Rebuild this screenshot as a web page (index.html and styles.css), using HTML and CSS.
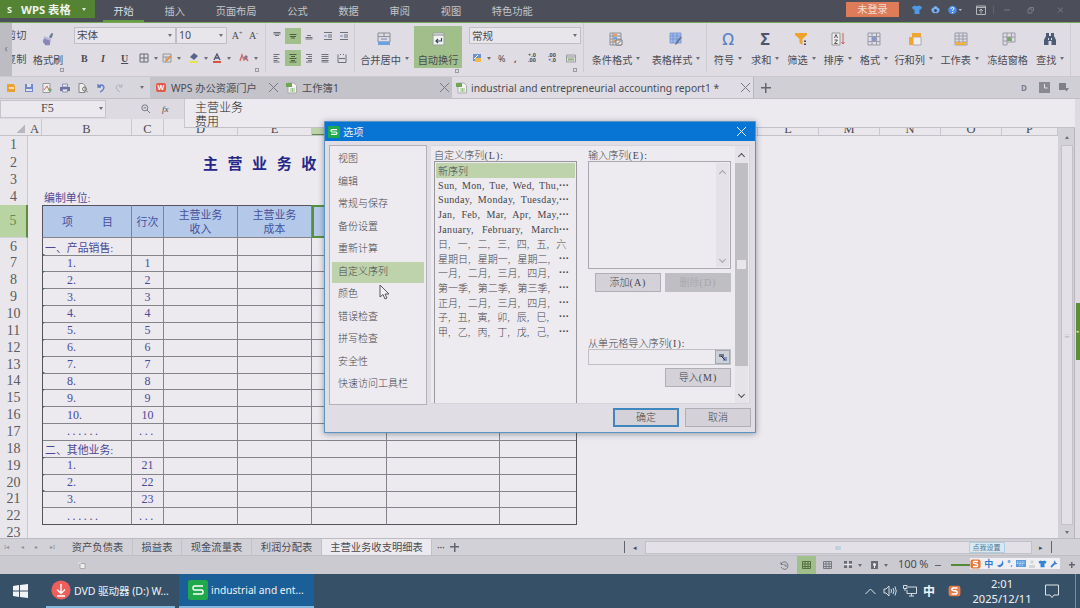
FILE: index.html
```html
<!DOCTYPE html>
<html lang="zh-CN">
<head>
  <meta charset="UTF-8" />
  <meta name="viewport" content="width=device-width, initial-scale=1" />
  <title>WPS 表格</title>
  <link rel="stylesheet" href="styles.css">
</head>
<body>
  <header class="titlebar">
    <div class="brand"><b class="brand-s">S</b><b>WPS 表格</b><i class="arrow"></i></div>
    <nav class="menu">
      <span class="active">开始</span><span>插入</span><span>页面布局</span><span>公式</span><span>数据</span><span>审阅</span><span>视图</span><span>特色功能</span>
    </nav>
    <span class="login">未登录</span>
    <div class="win-icons">
      <svg width="10" height="10" viewBox="0 0 10 10"><path fill="#4f9ae6" d="M0 2l3-1.500q2 1.500 4 0L10 2 9 4.500H7.500V9h-5V4.500H1z"/></svg>
      <svg width="9" height="9" viewBox="0 0 9 9"><path fill="#79aef0" d="M2 3q2.500-4 5 0 2 0 1.500 3Q7 9 4.500 8 2 9 .5 6 0 3 2 3z"/><circle cx="4.500" cy="5.500" r="1.500" fill="#3b4b68"/></svg>
      <svg width="14" height="10" viewBox="0 0 14 10"><circle cx="4.500" cy="5" r="4.300" fill="#4d8ce4"/><path d="M3 3.800q.2-1.400 1.600-1.300 2 .3 1 1.700-1 .7-1 1.600" fill="none" stroke="#fff"/><path d="M4 7h1.200v1H4z" fill="#fff"/><path d="M10.500 4h3.500l-1.700 2z" fill="#bbb"/></svg>
      <svg width="10" height="10" viewBox="0 0 10 10"><path d="M.5 1h9v8.500h-9zM.5 2.500h9M5 8.500V4.200M3 6l2-2 2 2" fill="none" stroke="#b5b6bb"/></svg>
      <span class="vsep"></span>
      <svg class="dim" width="60" height="8" viewBox="0 0 60 8"><path d="M1 4h6M25 3h4v4h-4zM26.500 3V1.500h4V5M55 1.500l5 5M60 1.500l-5 5" fill="none" stroke="#777a82"/></svg>
    </div>
  </header>

  <section class="ribbon">
    <div class="ribbon-scroll">‹</div>
    <div class="clip"><span>剪切</span><span>复制</span></div>
    <div class="big painter">
      <svg width="14" height="16" viewBox="0 0 14 16"><path d="M8 6l3-5 2 1-2 5z" fill="#68789c"/><path d="M3 5l7 3-1 7H4L1 11z" fill="#8987b8"/><path d="M3 5l7 3-.5 2L2 7z" fill="#b8b8d8"/></svg>
      <span>格式刷</span><span class="launch"></span>
    </div>
    <div class="group font-group">
      <div class="font-row1">
        <span class="combo">宋体<i class="arrow"></i></span><span class="combo">10<i class="arrow"></i></span><span class="serif">A<sup>+</sup></span><span class="serif">A<sup>-</sup></span>
      </div>
      <div class="font-row2">
        <b class="serif">B</b><b class="serif"><i>I</i></b><b class="serif"><u>U</u></b>
        <span class="tool"><svg width="10" height="10" viewBox="0 0 10 10"><path d="M1 1h8v8H1zM5 1v8M1 5h8" fill="none" stroke="#666a75"/></svg><i class="arrow"></i></span>
        <span class="tool"><svg width="10" height="10" viewBox="0 0 10 10"><path d="M1 1h8v8H1zM1 4h8M4 4v5" fill="none" stroke="#92949c"/><path d="M4 8l5-5" stroke="#e49146" stroke-width="2"/></svg><i class="arrow"></i></span>
        <span class="tool"><svg width="10" height="10" viewBox="0 0 10 10"><path d="M5 0l4 3-4 4-4-3z" fill="#586586"/><path d="M1 8h8v2H1z" fill="#e7e34b"/></svg><i class="arrow"></i></span>
        <span class="tool"><svg width="10" height="10" viewBox="0 0 10 10"><path d="M2 7l3-6 3 6M3 5h4" fill="none" stroke="#4c5571" stroke-width="1.300"/><path d="M1 8h8v2H1z" fill="#d85244"/></svg><i class="arrow"></i></span>
        <span class="tool"><svg width="10" height="10" viewBox="0 0 10 10"><path d="M1 8l2-6 2 5 2-2 2 3" fill="none" stroke="#cc6e6c" stroke-width="1.500"/><path d="M5 4l2-2 2 2-3 3z" fill="#8a6e8d"/></svg><i class="arrow"></i></span>
      </div>
      <span class="launch"></span>
    </div>
    <div class="group align-group">
      <div class="align-row">
        <svg viewBox="0 0 16 16"><path d="M4.500 4.500h7M4.500 6h7M6 7.500h4"/></svg>
        <svg class="on" viewBox="0 0 16 16"><path d="M4.500 6.500h7M5 8.500h6M6 10h4"/></svg>
        <svg viewBox="0 0 16 16"><path d="M6 7.500h4M4.500 9.500h7M4.500 11h7"/></svg>
        <span></span>
        <svg viewBox="0 0 16 16"><path d="M4 4.500h8M8 7h4M8 9h4M4 11.500h8"/><path class="blue" d="M7 8H4"/></svg>
        <svg viewBox="0 0 16 16"><path d="M4 4.500h8M8 7h4M8 9h4M4 11.500h8"/><path class="blue" d="M7 8H4"/></svg>
      </div>
      <div class="align-row row-b">
        <svg viewBox="0 0 16 16"><path d="M4.500 4.500h6M4.500 6.500h4M4.500 8.500h6M4.500 10.500h4M4.500 12h6"/></svg>
        <svg class="on" viewBox="0 0 16 16"><path d="M4.500 4.500h7M6 6.500h4M4.500 8.500h7M6 10.500h4M4.500 12h7"/></svg>
        <svg viewBox="0 0 16 16"><path d="M5 4.500h6M7 6.500h4M5 8.500h6M7 10.500h4M5 12h6"/></svg>
        <svg viewBox="0 0 16 16"><path d="M4.500 4.500h7M4.500 6.500h7M4.500 8.500h7M4.500 10.500h7M4.500 12h7"/></svg>
        <svg viewBox="0 0 16 16"><path d="M4 4.500v8M12 4.500v8M5 8.500h6M4 12.500h8M6 4.500h1M9 4.500h1"/></svg>
      </div>
    </div>
    <div class="big merge">
      <svg width="14" height="14" viewBox="0 0 14 14"><path d="M1 1h12v9H1zM1 4.500h12M7 1v3" fill="none" stroke="#8a8c96"/><path d="M1 9.500h12V13H1z" fill="#6da0de"/><path d="M4 7h6" stroke="#6f83ad"/></svg>
      <span>合并居中<i class="arrow"></i></span>
    </div>
    <div class="big wrap">
      <svg width="13" height="14" viewBox="0 0 13 14"><path d="M1 1h11v12H1z" fill="#f1f3f3" stroke="#9a9fa0"/><path d="M1 3h11" stroke="#888"/><path d="M9.500 6v3H4m2-2L4 9l2 2" fill="none" stroke="#38465b" stroke-width="1.200"/></svg>
      <span>自动换行</span><span class="launch"></span>
    </div>
    <div class="group number-group">
      <span class="combo">常规<i class="arrow"></i></span>
      <div class="number-row">
        <span class="tool"><svg width="10" height="10" viewBox="0 0 10 10"><path d="M1 1h8v7H1z" fill="#6b94cf"/><path d="M3 5h6v4H3z" fill="#efb94e"/><path d="M2 6l4-4" stroke="#fff"/></svg><i class="arrow"></i></span>
        <span>%</span><b>,</b><small>+.0<br>.00</small><small>.00<br><em>+</em>.0</small>
        <svg width="10" height="9" viewBox="0 0 10 9"><path d="M.5 1h9v7h-9zM.5 3h9" fill="none" stroke="#9a9ca2"/><path d="M2 5.500h6" stroke="#8db577" stroke-width="2"/></svg>
      </div>
      <span class="launch"></span>
    </div>
    <div class="big w-cond">
      <svg width="14" height="14" viewBox="0 0 14 14"><path d="M1 1h11v12H1zM1 4h11M1 7h11M1 10h11M4 1v12" fill="none" stroke="#8f9098"/><path d="M5 2h3v2H5zM5 8h3v2H5z" fill="#ec9a51"/><path d="M5 5h3v2H5z" fill="#6da0e4"/><path d="M7 8h6v5H7z" fill="#eee" stroke="#777"/><path d="M8.500 12l3-3" stroke="#666"/></svg>
      <span>条件格式<i class="arrow"></i></span>
    </div>
    <div class="big w-style">
      <svg width="14" height="14" viewBox="0 0 14 14"><path d="M1 1h11v10H1z" fill="#9ebbee"/><path d="M1 1h11v10H1zM1 4h11M1 7h11M4 1v10M8 1v10" fill="none" stroke="#718fcb" stroke-width=".8"/><path d="M13 5l-5 7-2 1 1-3 4-5z" fill="#667489"/></svg>
      <span>表格样式<i class="arrow"></i></span>
    </div>
    <div class="big w-2 first"><b class="glyph omega">Ω</b><span>符号<i class="arrow"></i></span></div>
    <div class="big w-2"><b class="glyph">Σ</b><span>求和<i class="arrow"></i></span></div>
    <div class="big w-2">
      <svg width="14" height="14" viewBox="0 0 14 14"><path d="M1 1h12v2L8.500 7v6l-3-2V7L1 3z" fill="#f0a22b"/><path d="M10 8.500h2v1.500h-2zM10 11.500h2V13h-2z" fill="#446"/></svg>
      <span>筛选<i class="arrow"></i></span>
    </div>
    <div class="big w-2">
      <svg width="14" height="14" viewBox="0 0 14 14"><path d="M1 1h8v12H1z" fill="#eee" stroke="#999"/><path d="M3.500 6L5 2.500 6.500 6M3.500 8h3l-3 3.500h3" fill="none" stroke="#555"/><path d="M12 1v11m-1.500-2l1.500 2 1.500-2" fill="none" stroke="#cf5a5a"/></svg>
      <span>排序<i class="arrow"></i></span>
    </div>
    <div class="big w-2">
      <svg width="14" height="14" viewBox="0 0 14 14"><path d="M5 4.500h4.500v5H5z" fill="#8195d8"/><path d="M1 1h12v12H1zM1 4.500h12M1 9.500h12M5 1v12M9.500 1v12" fill="none" stroke="#999ba8"/></svg>
      <span>格式<i class="arrow"></i></span>
    </div>
    <div class="big w-3">
      <svg width="14" height="14" viewBox="0 0 14 14"><path d="M5 5h8v8H5z" fill="#f0edf1" stroke="#aaa"/><path d="M1 5v8h4V5h8V1H4v4z" fill="#f0a434"/></svg>
      <span>行和列<i class="arrow"></i></span>
    </div>
    <div class="big w-3 sheetbtn">
      <svg width="14" height="14" viewBox="0 0 14 14"><path d="M1 1h12v12H1zM1 4h12M1 7h12M1 10h12M5 1v12M9 1v12" fill="none" stroke="#999ba8"/><path d="M1 10v3h10l2-3H8v1H5v-1z" fill="#f0b03f"/></svg>
      <span>工作表<i class="arrow"></i></span>
    </div>
    <div class="big w-4">
      <svg width="14" height="14" viewBox="0 0 14 14"><path d="M5 5h5v4H5z" fill="#7ba565"/><path d="M1 1h12v9H5v3H1zM1 5h12M1 9h4M5 1v9M9.500 1v9" fill="none" stroke="#999ba8"/></svg>
      <span>冻结窗格</span>
    </div>
    <div class="big w-2 last">
      <svg width="14" height="14" viewBox="0 0 14 14"><path d="M3 1h3v3h2V1h3v3l2 4v5H8.500V9h-3v4H1V8l2-4z" fill="#4c5a74"/><path d="M5.500 6v2M8.500 6v2" stroke="#dedde3"/></svg>
      <span>查找<i class="arrow"></i></span>
    </div>
  </section>

  <section class="docbar">
    <div class="quick">
      <svg viewBox="0 0 10 10"><path d="M1 1h7l1 2v6H1z" fill="#eda135"/><path d="M3 4h5v2H3z" fill="#f8dfad"/></svg>
      <svg viewBox="0 0 10 10"><path d="M1 1h8v8H1z" fill="#7187c7"/><path d="M3 1h4v3H3zM2 6h6v2H2z" fill="#dbe0f0"/></svg>
      <svg viewBox="0 0 10 10"><path d="M1 .5h7v9H1z" fill="#eee" stroke="#999"/><path d="M2 7l3-4 2 4" fill="none" stroke="#ce6363"/><path d="M6 7h4M8 5v4" stroke="#5ba45b"/></svg>
      <svg viewBox="0 0 10 10"><path d="M0 4h10v4H0z" fill="#7174a2"/><path d="M2.500 1h5v3h-5zM2.500 6h5v3h-5z" fill="#e4e4f1" stroke="#7174a2" stroke-width=".7"/></svg>
      <svg viewBox="0 0 10 10"><path d="M1 .5h4l2 2v7H1z" fill="#eee" stroke="#888"/><circle cx="6.500" cy="6" r="2" fill="none" stroke="#777"/><path d="M8 7.500l2 2" stroke="#777"/></svg>
      <svg viewBox="0 0 10 10"><path d="M2 1v3h3M2 4q4-4 6 0 0 3-4 5" fill="none" stroke="#5b79c5" stroke-width="1.300"/></svg>
      <svg viewBox="0 0 10 10"><path d="M8 1v3H5M8 4Q4 0 2 4q0 3 4 5" fill="none" stroke="#b1b0b9"/></svg>
      <i class="arrow"></i>
    </div>
    <div class="doc portal"><span class="w-logo">W</span><span>WPS 办公资源门户</span><i class="x"></i></div>
    <div class="doc book"><svg width="11" height="12" viewBox="0 0 11 12"><path d="M2 1h6l2.500 2.500V11H2z" fill="#f4f4f4" stroke="#aaa"/><path d="M0 1h6v4H0z" fill="#70a551"/><path d="M4 7h5M4 9h5M6.500 6v4" stroke="#9ac485"/></svg><span>工作簿1</span><i class="x"></i></div>
    <div class="doc current"><svg width="11" height="12" viewBox="0 0 11 12"><path d="M2 1h6l2.500 2.500V11H2z" fill="#f4f4f4" stroke="#aaa"/><path d="M0 1h6v4H0z" fill="#70a551"/><path d="M4 7h5M4 9h5M6.500 6v4" stroke="#9ac485"/></svg><span class="doc-name">industrial and entrepreneurial accounting report1 *</span><i class="x"></i></div>
    <span class="plus"></span>
    <div class="doc-icons"><b>D</b><svg width="11" height="11" viewBox="0 0 11 11"><path d="M0 0h11v11H0z" fill="#898a91"/><path d="M5.500 2v4h3" fill="none" stroke="#e4e4e8"/></svg><svg width="10" height="9" viewBox="0 0 10 9"><path d="M0 0h7v7H0zM5 5h5L7.500 8.500z" fill="#7e8088"/></svg></div>
  </section>

  <section class="formula">
    <div class="namebox"><span>F5</span><i class="arrow"></i></div>
    <svg class="lens" width="9" height="9" viewBox="0 0 9 9"><circle cx="3.800" cy="3.800" r="3" fill="none" stroke="#777a85"/><path d="M6 6l3 3M2.500 3.800h2.600" stroke="#777a85"/></svg>
    <i class="fx">fx</i>
    <div class="formula-text">主营业务<br>费用</div>
  </section>

  <main class="work">
    <div class="sheet-area">
      <div class="cols" id="cols"></div>
      <div class="sheet" id="sheet"></div>
    </div>
    <div class="vscroll"><i class="arrow up"></i><div class="vthumb"><span>≡</span></div><i class="arrow"></i></div>
    <div class="side"><div class="handle">◂</div></div>
  </main>

  <section class="sheettabs">
    <div class="navs"><i>I◂</i><i>◂</i><i>▸</i><i>▸I</i></div>
    <span class="tab t5">资产负债表</span><span class="tab t3">损益表</span><span class="tab t5">现金流量表</span><span class="tab t5">利润分配表</span><span class="tab on">主营业务收支明细表</span>
    <span class="dots">···</span><span class="plus"></span>
    <div class="hscroll"><i class="bar"></i><i>◂</i><div class="hthumb">ııı<span class="tip">点我设置</span></div><i>▸</i><i class="bar"></i></div>
  </section>

  <section class="status">
    <svg class="macro" width="8" height="7" viewBox="0 0 8 7"><path d="M2 1.500h5v5H2z" fill="#eee" stroke="#aaa"/><path d="M0 1h3" stroke="#eee"/></svg>
    <svg class="hist" width="9" height="9" viewBox="0 0 9 9"><path d="M1 3q3-4 6.500-.5Q9 7 5 8.500 2 8 1 6M1 1v2.500h2.500M5 3v2h2" fill="none" stroke="#777a82"/></svg>
    <span class="view-on"><svg width="9" height="8" viewBox="0 0 9 8"><path d="M.5.500h8v7h-8zM.5 3h8M.5 5.500h8M3 0v8M6 0v8" fill="none" stroke="#557043"/></svg></span>
    <svg class="v2" width="9" height="8" viewBox="0 0 9 8"><path d="M.5.500h8v7h-8zM.5 3h8M.5 5.500h8M3 0v8M6 0v8" fill="none" stroke="#777a82"/></svg>
    <svg class="v3" width="8" height="8" viewBox="0 0 8 8"><path d="M0 0h8v7H0z" fill="#686b74"/><path d="M4 0v7M0 3.500h8" stroke="#e6e5ea" stroke-width="1.500"/></svg><i class="arrow"></i>
    <svg class="v4" width="7" height="8" viewBox="0 0 7 8"><path d="M0 0h7v8H0z" fill="#686b74"/><circle cx="3.500" cy="3.500" r="1.500" fill="#eee"/><path d="M3 4h1v3H3z" fill="#eee"/></svg><i class="arrow"></i>
    <span class="pct">100 %</span><span class="minus"></span><span class="slider"></span>
    <div class="ime">
      <svg width="11" height="10" viewBox="0 0 11 10"><rect x=".5" y=".5" width="10" height="9" rx="2" fill="#e87636"/><path d="M8 2.500H4q-1.500 1 0 2l3 .5q1.500 1.200 0 2.500H3" fill="none" stroke="#fff" stroke-width="1.300"/></svg><b>中</b>
      <svg width="8" height="8" viewBox="0 0 8 8"><path d="M6 0q1 5-5 5.500Q4 9 7 5 8 2 6 0z" fill="#3e82d0"/></svg><b class="punct">°,</b>
      <svg width="10" height="7" viewBox="0 0 10 7"><rect width="10" height="7" fill="#5b9bdc"/><path d="M1 2h8M1 3.500h8M3 5.200h4" stroke="#e7f0fa" stroke-dasharray="1 .6" stroke-width=".8"/></svg>
      <svg width="6" height="8" viewBox="0 0 6 8"><circle cx="3" cy="2" r="1.700" fill="#d6d5d9"/><path d="M0 8V5h6v3z" fill="#d6d5d9"/></svg>
      <svg width="9" height="8" viewBox="0 0 10 10"><path fill="#2e83da" d="M0 2l3-1.500q2 1.500 4 0L10 2 9 4.500H7.500V9h-5V4.500H1z"/></svg>
      <svg width="8" height="8" viewBox="0 0 8 8"><path d="M1 7l4-4" stroke="#3e82d0" stroke-width="1.800"/><path d="M5 .5q-2 1-.5 3t3-.5L6 3 5.500 2z" fill="#3e82d0"/></svg>
    </div>
    <span class="zoomplus plus"></span>
  </section>

  <footer class="taskbar">
    <svg class="start" width="15" height="14" viewBox="0 0 15 14"><path d="M0 2l6-1v5.500H0zM7 .9L15 0v6.500H7zM0 7.500h6V13l-6-1zM7 7.500h8V14l-8-1z" fill="#f1f4f7"/></svg>
    <div class="task dvd"><svg width="20" height="20" viewBox="0 0 20 20"><circle cx="10" cy="10" r="9.600" fill="#ee5f5c"/><path d="M10 4v9M6 9.500l4 4 4-4M6 16h8" fill="none" stroke="#fff" stroke-width="1.400"/></svg><span>DVD 驱动器 (D:) W...</span></div>
    <div class="task wps"><svg width="20" height="20" viewBox="0 0 20 20"><rect width="20" height="20" rx="2.500" fill="#1fa84c"/><path d="M15 6H6.500Q5 6 5 8t1.500 2h7q1.500 0 1.500 2t-1.500 2H5" fill="none" stroke="#fff" stroke-width="1.500"/></svg><span>industrial and ent...</span></div>
    <div class="tray">
      <svg width="11" height="7" viewBox="0 0 11 7"><path d="M.5 6l5-5 5 5" fill="none" stroke="#dfe6ea"/></svg>
      <svg width="14" height="12" viewBox="0 0 14 12"><path d="M1 4h2l3-3v10L3 8H1zM8 4q1 2 0 4M10 3q2 3 0 6M12 1.500q2.500 4.500 0 9" fill="none" stroke="#d5dde3"/></svg>
      <svg width="14" height="12" viewBox="0 0 14 12"><path d="M5 2h8.500v6.500H4V5M6 11h5M8.500 8.500V11M.5.500h3.500v3H.5zM2 4v2" fill="none" stroke="#d5dde3"/></svg>
      <b class="zh">中</b>
      <svg class="sogou" width="13" height="12" viewBox="0 0 11 10"><rect x=".5" y=".5" width="10" height="9" rx="2" fill="#e87b49"/><path d="M8 2.500H4q-1.500 1 0 2l3 .5q1.500 1.200 0 2.500H3" fill="none" stroke="#fff" stroke-width="1.300"/></svg>
      <div class="clock">2:01<br>2025/12/11</div>
      <svg class="note" width="15" height="15" viewBox="0 0 15 15"><path d="M.5 1h13v10H9l-2 2.500L5 11H.5z" fill="none" stroke="#dfe6ea"/></svg>
    </div>
  </footer>

  <div class="dialog">
    <div class="dlg-title"><svg width="12" height="12" viewBox="0 0 20 20"><rect width="20" height="20" rx="2.500" fill="#1fa84c"/><path d="M15 6H6.500Q5 6 5 8t1.500 2h7q1.500 0 1.500 2t-1.500 2H5" fill="none" stroke="#fff" stroke-width="1.800"/></svg><span>选项</span><i class="x"></i></div>
    <div class="dlg-body">
      <ul class="cats">
        <li>视图</li><li>编辑</li><li>常规与保存</li><li>备份设置</li><li>重新计算</li><li class="sel">自定义序列</li><li>颜色</li><li>错误检查</li><li>拼写检查</li><li>安全性</li><li>快速访问工具栏</li>
      </ul>
      <div class="panel">
        <div class="left">
          <label>自定义序列<span class="key">(L):</span></label>
          <ul class="lists" id="lists"></ul>
        </div>
        <div class="right">
          <label>输入序列<span class="key">(E):</span></label>
          <div class="entry"><div class="entry-scroll"><i class="chev up"></i><i class="chev"></i></div></div>
          <div class="btns"><span class="btn">添加<span class="key">(A)</span></span><span class="btn off">删除<span class="key">(D)</span></span></div>
          <label class="from">从单元格导入序列<span class="key">(I):</span></label>
          <div class="range"><span><svg width="8" height="7" viewBox="0 0 8 7"><path d="M0 0h5v3H0z" fill="#6d7587"/><path d="M4 3h4v4H4z" fill="#7e96c1"/><path d="M2 2l4 4" stroke="#333"/></svg></span></div>
          <div class="btns end"><span class="btn">导入<span class="key">(M)</span></span></div>
        </div>
        <div class="pscroll"><i class="chev up dark"></i><div class="pthumb"><span></span></div><i class="chev dark"></i></div>
      </div>
    </div>
    <div class="dlg-foot"><span class="btn ok">确定</span><span class="btn">取消</span></div>
  </div>
  <svg class="cursor" width="11" height="16" viewBox="0 0 11 16"><path d="M1 1v12l3-2.500 2 4.500 2-1-2-4h4z" fill="#f2f1f4" stroke="#55565c"/></svg>

  <script src="script.js"></script>
</body>
</html>
```
FILE: styles.css
```css
* { box-sizing: border-box; }

body {
  margin: 0;
  width: 1080px;
  height: 608px;
  overflow: hidden;
  display: flex;
  flex-direction: column;
  position: relative;
  background: #eceaef;
  font-family: "Noto Sans", "Noto Sans CJK SC", sans-serif;
  font-size: 10.2px;
  color: #4a4b53;
}

svg { flex: none; display: block; }
ul { list-style: none; margin: 0; padding: 0; }

.arrow {
  flex: none;
  display: inline-block;
  border: 2.5px solid transparent;
  border-top: 3px solid #6e7078;
  border-bottom: 0;
}
.arrow.up { border-top: 0; border-bottom: 3px solid #6e7078; }
.x { width: 9px; height: 9px; flex: none; background:
  linear-gradient(45deg, transparent 46%, #777982 46% 54%, transparent 54%),
  linear-gradient(-45deg, transparent 46%, #777982 46% 54%, transparent 54%); }
.plus { width: 10px; height: 10px; flex: none; background:
  linear-gradient(#64666f, #64666f) center / 100% 1.5px no-repeat,
  linear-gradient(#64666f, #64666f) center / 1.5px 100% no-repeat; }

/* title bar */
.titlebar { flex: none; height: 23px; display: flex; background: #4c4f59; border-bottom: 1px solid #76a95a; }
.brand { width: 95px; height: 18px; padding-left: 7px; display: flex; align-items: center; gap: 6px; background: #548433; color: #f0f3ec; font-size: 11.3px; white-space: nowrap; }
.brand-s { font-size: 9px; width: 8px; }
.brand .arrow { border-top-color: #dfe8d8; margin-left: 5px; }
.menu { display: flex; gap: 10px; margin-left: 8px; line-height: 23px; color: #c4c5ca; width: 742px; }
.menu span { padding: 0 10.4px; height: 22px; white-space: nowrap; }
.menu .active { color: #dedfe2; border-bottom: 2px solid #669c43; }
.login { width: 53px; height: 15px; margin-top: 2px; margin-left: 1px; background: #de7b59; color: #f1dcd3; line-height: 15px; text-align: center; }
.win-icons { display: flex; align-items: center; gap: 9px; height: 19px; margin-left: 13px; }
.win-icons svg:nth-child(3) { margin-left: -1px; }
.win-icons svg:nth-child(4) { margin-left: 5px; }
.vsep { width: 1px; height: 8px; background: #63656d; margin-left: -2px; }

/* ribbon */
.ribbon { flex: none; height: 54px; display: flex; background: #dfdde3; border-bottom: 1px solid #cbcad0; overflow: hidden; }
.ribbon-scroll { width: 12px; background: #bdbcc3; text-align: center; line-height: 50px; color: #777; flex: none; }
.clip { width: 15px; flex: none; display: flex; flex-direction: column; align-items: flex-end; overflow: hidden; line-height: 24px; white-space: nowrap; }
.clip span { width: 21px; }
.big { position: relative; flex: none; display: flex; flex-direction: column; align-items: center; padding-top: 9px; white-space: nowrap; }
.big svg { height: 14px; }
.big > span:not(.launch) { line-height: 16px; margin-top: 6px; }
.big .arrow { margin-left: 4px; vertical-align: 4px; }
.painter { width: 42px; height: 49px; }
.painter .launch { right: 5px; }
.group { flex: none; position: relative; border-right: 1px solid #cdccd2; height: 49px; }
.launch { position: absolute; right: 6px; bottom: 0; width: 4px; height: 4px; border: 1px solid #9a9ba1; }
.font-group { width: 197px; padding: 4px 0 0 5px; }
.font-row1 { display: grid; grid-template-columns: 102px 51px 20px 13px; height: 17px; text-align: center; line-height: 17px; }
.combo { display: flex; align-items: center; justify-content: space-between; padding: 0 3px 0 2px; border: 1px solid #c0bfc6; background: #e8e6eb; height: 17px; font-size: 10.6px; }
.serif { font-family: "Liberation Serif", serif; font-size: 10px; }
.serif sup { font-size: 6px; line-height: 0; }
.font-row2 { display: grid; grid-template-columns: 20px 20px 25px 23px 27px 23px 27px 22px; margin-top: 5px; height: 18px; align-items: center; justify-items: start; }
.font-row2 b { padding-left: 7px; }
.tool { display: flex; align-items: center; gap: 5px; }
.align-group { width: 89px; padding: 5px 0 0 3px; }
.align-row { display: grid; grid-template-columns: 16px 16px 16px 3px 16px 16px; height: 16px; }
.align-row svg { width: 16px; height: 16px; stroke: #6f717a; fill: none; }
.align-row .on { background: #a0bf8b; stroke: #4c6240; }
.align-row .blue { stroke: #6d84c8; }
.row-b { grid-template-columns: 16px 16px 16px 17px 16px; margin-top: 6px; }
.merge { width: 59px; }
.merge svg { margin-left: -1px; }
.wrap { width: 48px; height: 42px; margin-top: 3px; padding-top: 6px; background: #a0bf8b; }
.wrap .launch { right: 3px; bottom: -5px; }
.number-group { width: 122px; padding: 4px 2px 0 7px; }
.number-row { display: grid; grid-template-columns: 29px 16px 14px 20px 18px 14px; margin-top: 5px; height: 18px; align-items: center; font-size: 9px; }
.number-row .tool { padding-left: 3px; }
.number-row small { font-size: 5.5px; line-height: 5px; font-weight: bold; }
.number-row em { color: #4667c8; }
.w-cond { width: 62px; padding-left: 2px; }
.w-style { width: 61px; border-right: 1px solid #cdccd2; height: 49px; }
.w-2 { width: 36.3px; }
.w-2.first { width: 40px; padding-left: 2px; }
.w-2.last { width: 37px; border-right: 1px solid #cdccd2; padding-right: 4px; }
.w-3 { width: 46px; }
.w-3 > span { margin-left: -3px; }
.w-4 { width: 50px; }
.w-4 > span { margin-left: -3px; }
.glyph { font-size: 16px; line-height: 14px; height: 14px; color: #49566d; }
.omega { color: #5b83c7; font-weight: 500; }

/* document tabs */
.docbar { flex: none; height: 22px; display: flex; align-items: center; background: #d0cfd5; border-bottom: 1px solid #c0bfc6; font-size: 10.3px; }
.quick { width: 151px; height: 21px; display: flex; align-items: center; gap: 8px; padding-left: 6px; background: #d8d6dd; border-right: 1px solid #c3c2c9; }
.quick svg { width: 10px; height: 10px; }
.quick .arrow { margin-left: 8px; }
.doc { height: 21px; display: flex; align-items: center; padding: 0 3px 0 5px; gap: 5px; background: #c4c3ca; white-space: nowrap; }
.doc .x { margin-left: auto; }
.portal { width: 130px; }
.w-logo { width: 10px; height: 9px; border-radius: 2px; background: #e45a4a; color: #fff; font-size: 7px; line-height: 9px; text-align: center; font-weight: bold; }
.book { width: 171px; }
.current { width: 302px; padding-left: 4px; gap: 4px; background: #dfdde3; border-right: 1px solid #b9b8bf; }
.doc-name { font-size: 10.27px; }
.docbar .plus { margin-left: 7px; }
.doc-icons { display: flex; align-items: center; gap: 9px; margin-left: 250px; color: #797b83; font-size: 8px; }
.doc-icons b { margin-right: 3px; }

/* formula bar */
.formula { flex: none; position: relative; height: 20px; display: flex; align-items: center; background: #dddbe1; padding-bottom: 1px; }
.namebox { width: 106px; height: 18px; display: flex; align-items: center; background: #ebe9ee; border: 1px solid #c5c4ca; font: 12px "Liberation Serif", serif; }
.namebox span { flex: 1; padding-left: 40px; }
.namebox .arrow { margin-right: 2px; border-width: 3px 2px 0; }
.lens { margin-left: 35px; }
.fx { margin-left: 12px; font: italic 9px "Liberation Serif", serif; }
.formula-text { position: absolute; left: 184px; top: 0; width: 891px; height: 29px; padding: 2px 0 0 10px; background: #eceaef; border-left: 1px solid #c8c7cd; border-bottom: 1px solid #c2c1c7; font: 300 12px/14.3px "Liberation Serif", "Noto Sans CJK SC", serif; color: #222; z-index: 2; overflow: hidden; }

/* worksheet */
.work { flex: none; height: 419px; display: flex; }
.sheet-area { width: 1058px; display: flex; flex-direction: column; }
.cols, .row { display: grid; grid-template-columns: 28px 14px 90px 32px 74px 74px 75px 113px 77px; }
.cols { flex: none; height: 17px; grid-template-columns: 28px 14px 90px 32px 74px 74px 75px 113px 77px 60px 60px 61px 61px 61px 61px 61px 56px; background: #e9e7ec; border-bottom: 1px solid #c3c2c8; }
.cols span { font: 12.5px/21px "Liberation Serif", serif; text-align: center; border-right: 1px solid #c9c8ce; overflow: hidden; color: #4b4b52; }
.cols .corner { border-right: 0; background: linear-gradient(135deg, transparent 50%, #b8b7bd 50%) 16px 5px / 9px 9px no-repeat; }
.cols .hl { background: #bdd4ab; border-bottom: 1px solid #5c8b41; }
.sheet { flex: 1; display: grid; grid-template-rows: 15.5px 19px 17px 17px 33px repeat(17, 16.86px) 1fr; }
.row > span { white-space: nowrap; color: #4b4997; font: 12px "Liberation Serif", "Noto Sans CJK SC", serif; display: flex; align-items: center; justify-content: center; text-align: center; }
.row .no { font-size: 14px; color: #5a5a60; padding-top: 1px; border-right: 1px solid #cac9cf; border-bottom: 1px solid #d2d1d6; background: #e9e7ec; }
.row .no.hl { background: #b8d4a3; color: #5f8b50; border-right: 2px solid #5c8b41; }
.row .cell { padding-top: 1px; border-right: 1px solid #85848a; border-bottom: 1px solid #85848a; }
.row .cell.b { border-left: 1px solid #55545a; position: relative; justify-content: flex-start; padding-left: 24px; }
.row .cell.b.title { padding-left: 2px; font-size: 10.9px; }
.row .cell.etc { letter-spacing: 2.6px; }
.row .cell.flag::before { content: ""; position: absolute; left: 0; top: 0; border: 1.5px solid #2c7d42; border-right-color: transparent; border-bottom-color: transparent; }
.row .cell.h { border-right-color: #55545a; }
.row.head .cell { background: #b4c9ea; border-top: 1px solid #55545a; font-size: 10.9px; line-height: 14px; color: #44509a; }
.row.head .b { padding-left: 19px; gap: 29px; }
.row.head .f { border-left: 2px solid #55913c; border-top: 2px solid #55913c; border-bottom: 2px solid #55913c; }
.row.last .cell { border-bottom-color: #55545a; }
.row .big-title { grid-column: 5 / 9; justify-content: flex-start; padding-left: 39px; padding-bottom: 2px; font-size: 15px; font-weight: 700; word-spacing: 5.8px; color: #25288a; }
.row .unit { grid-column: 3; justify-content: flex-start; padding-left: 2px; font-size: 10.9px; }

.vscroll { width: 17px; padding: 8px 2px 4px 4px; display: flex; flex-direction: column; align-items: center; gap: 6px; background: #d2d1d7; border-right: 1px solid #b8b7be; }
.vscroll .arrow.up { margin-top: 9px; }
.vthumb { flex: 1; width: 12px; background: #e3e1e7; border: 1px solid #c2c1c8; display: flex; align-items: center; justify-content: center; font-size: 6px; color: #aaa; }
.side { width: 5px; padding-top: 184px; background: #dedce2; }
.handle { width: 4px; height: 57px; margin-left: 1px; background: #5c8d3b; color: #d8e7cc; font-size: 5px; line-height: 57px; overflow: hidden; }

/* sheet tabs and status bar */
.sheettabs { flex: none; height: 18px; display: flex; align-items: center; background: #d2d1d7; border-top: 1px solid #bcbbc2; border-bottom: 1px solid #bfbec5; font-size: 10.3px; }
.sheettabs i { font-style: normal; }
.navs { width: 63px; display: flex; justify-content: space-between; padding: 0 8px 0 4px; font-size: 6px; color: #8d8e96; }
.tab { height: 16px; line-height: 16px; text-align: center; border-right: 1px solid #c2c1c8; white-space: nowrap; }
.t5 { width: 70px; }
.t3 { width: 49px; }
.tab.on { width: 110px; background: #eceaef; }
.dots { margin-left: 5px; width: 13px; letter-spacing: -.3px; }
.sheettabs .plus { width: 9px; height: 9px; }
.hscroll { margin-left: 165px; width: 428px; height: 16px; display: flex; align-items: center; justify-content: space-between; font-size: 7px; }
.hscroll .bar { width: 1px; height: 12px; background: #62646c; }
.hthumb { position: relative; width: 387px; height: 13px; background: #e3e1e7; border: 1px solid #c2c1c8; text-align: center; color: #aaa; line-height: 11px; }
.tip { position: absolute; left: 323px; top: 0; width: 36px; height: 11px; background: #dbe8f1; border: 1px solid #b0cddd; border-radius: 1px; color: #4c7594; font-size: 7px; line-height: 9px; white-space: nowrap; }
.status { flex: none; height: 18px; display: flex; align-items: center; background: #cbcad0; }
.macro { margin-left: 78px; }
.hist { margin-left: 694px; }
.view-on { width: 19px; height: 18px; margin-left: 8px; background: #a0bf8b; display: flex; align-items: center; justify-content: center; }
.v2 { margin-left: 7px; }
.v3 { margin-left: 12px; }
.v4 { margin-left: 9px; }
.status .arrow { margin-left: 6px; }
.pct { margin-left: 10px; width: 35px; height: 18px; line-height: 16px; font-size: 11px; letter-spacing: -.1px; white-space: nowrap; }
.minus { width: 6px; height: 1px; background: #63656d; margin-left: 2px; }
.slider { width: 20px; height: 1.5px; background: #568a39; margin-left: 10px; }
.ime { width: 90px; height: 11px; display: flex; align-items: center; justify-content: space-between; background: #f0eff3; padding-right: 2px; margin: -3px 0 0 -1px; color: #2f79cd; font-size: 9px; line-height: 10px; }
.punct { font-size: 7px; }
.status .zoomplus { width: 6px; height: 6px; margin-left: 9px; }

/* taskbar */
.taskbar { flex: none; height: 34px; display: flex; align-items: center; background: #365067; color: #f0f3f5; font-size: 11px; }
.start { margin-left: 13px; }
.task { height: 34px; display: flex; align-items: center; gap: 3px; white-space: nowrap; border-bottom: 2px solid #84b8de; }
.dvd { width: 129px; margin-left: 18px; padding-left: 5px; font-size: 10.6px; letter-spacing: -.1px; }
.wps { width: 135px; margin-left: 4px; padding-left: 9px; background: #1b5f98; font-size: 10.2px; }
.tray { margin-left: 551px; display: flex; align-items: center; height: 34px; width: 211px; border-right: 1px solid #7b8c9b; gap: 6px; }
.tray svg:nth-child(2) { margin-left: 1px; }
.zh { font-size: 12px; }
.sogou { margin-left: 7px; }
.clock { width: 70px; text-align: center; line-height: 15.5px; font-size: 11.1px; }
.note { margin-left: 2px; }

/* options dialog */
.dialog { position: absolute; left: 324px; top: 121px; width: 432px; height: 312px; z-index: 5; display: flex; flex-direction: column; background: #e0dee4; border: 1px solid #5b94c0; box-shadow: 0 1px 6px rgba(40, 50, 70, .45); font-family: "Liberation Serif", "Noto Sans CJK SC", serif; font-weight: 300; font-size: 10px; color: #45454b; }
.dlg-title { height: 20px; display: flex; align-items: center; gap: 3px; padding: 0 9px 0 3px; background: #0874d3; color: #e8f1fa; font: 10.2px "Noto Sans CJK SC", sans-serif; }
.dlg-title .x { margin-left: auto; filter: brightness(2); }
.dlg-body { height: 262px; display: flex; padding: 4px 4px 0; gap: 4px; }
.cats { width: 98px; height: 260px; padding: 3px 2px; background: #edebef; border: 1px solid #b3b2b8; }
.cats li { height: 21px; margin-bottom: 1.53px; padding-left: 6px; line-height: 20px; white-space: nowrap; font-size: 10px; }
.cats .sel { background: #bed2ac; }
.panel { width: 319px; height: 259px; display: flex; padding-left: 3px; background: #edebef; border: 1px solid #d5d4d9; border-left: 0; }
.left { width: 144px; height: 257px; display: flex; flex-direction: column; }
.panel label { height: 15px; line-height: 19px; white-space: nowrap; display: block; font-size: 10.1px; }
.key { font-size: 10px; font-weight: 400; letter-spacing: 1px; }
.lists { flex: 1; width: 143px; border: 1px solid #98979d; border-bottom: 0; padding: 1px; }
.lists li { height: 14.65px; display: flex; padding-left: 2px; line-height: 15px; white-space: pre; word-spacing: 5px; font-family: "Noto Sans CJK SC", sans-serif; }
.lists li.sel { background: #bed2ac; }
.lists li.en { font: 10px/16px "Liberation Serif", serif; letter-spacing: .35px; white-space: nowrap; word-spacing: 0; }
.lists .en .txt { text-align: justify; text-align-last: justify; }
.lists .txt { width: 121px; }
.lists .more { font: 10px/15px "Noto Sans", sans-serif; letter-spacing: .6px; font-weight: bold; }
.right { width: 143px; margin-left: 10px; }
.entry { height: 108px; padding: 1px; border: 1px solid #aaa9af; display: flex; justify-content: flex-end; }
.entry-scroll { width: 13px; background: #e4e2e8; display: flex; flex-direction: column; align-items: center; justify-content: space-between; padding: 8px 0 5px; }
.chev { width: 5px; height: 5px; border: solid #a3a2a9; border-width: 0 1px 1px 0; transform: rotate(45deg); }
.chev.up { transform: rotate(225deg); }
.chev.dark { border-color: #4c4c52; border-width: 0 1.5px 1.5px 0; }
.btns { display: flex; gap: 4px; margin-top: 4px; justify-content: flex-end; }
.btn { width: 66px; height: 19px; line-height: 18px; text-align: center; background: #d4d2d8; border: 1px solid #b0afb5; }
.btn.off { background: #bfbec3; border-color: #bfbec3; color: #a5a4aa; }
.panel label.from { margin-top: 42px; height: 15px; line-height: 19px; }
.range { height: 16px; border: 1px solid #c0bfc5; display: flex; justify-content: flex-end; }
.range span { width: 15px; display: flex; align-items: center; justify-content: center; background: #cdd1da; border: 1px solid #a5a7ae; }
.btns.end { margin-top: 3px; }
.pscroll { width: 13px; margin-left: 4px; display: flex; flex-direction: column; align-items: center; background: #e5e3e8; padding: 8px 0 6px; justify-content: space-between; }
.pthumb { width: 13px; height: 203px; margin-bottom: 22px; display: flex; align-items: center; justify-content: center; background: #bfbec2; }
.pthumb span { width: 9px; height: 9px; background: #e8e6ea; }
.dlg-foot { display: flex; justify-content: flex-end; gap: 6px; padding: 5px 4px; }
.btn.ok { border: 2px solid #3f87bd; line-height: 16px; }
.cursor { position: absolute; left: 379px; top: 284px; z-index: 6; }
```
FILE: script.js
```js
const colNames = ["", "A", "B", "C", "D", "E", "F", "G", "H", "I", "J", "K", "L", "M", "N", "O", "P"];

document.getElementById("cols").innerHTML = colNames
  .map((c, i) => `<span class="${i === 0 ? "corner" : c === "F" ? "hl" : ""}">${c}</span>`)
  .join("");

// [column B, column C] for rows 6 to 22
const rows = [["一、产品销售:", ""]];
for (let i = 1; i <= 10; i++) rows.push([i + ".", i]);
rows.push(["......", "..."], ["二、其他业务:", ""], ["1.", 21], ["2.", 22], ["3.", 23], ["......", "..."]);

const blanks = '<span class="cell"></span>'.repeat(4) + '<span class="cell h"></span>';
let html = `
  <div class="row"><span class="no">1</span></div>
  <div class="row"><span class="no">2</span><span class="big-title">主 营 业 务 收 支 明 细 表</span></div>
  <div class="row"><span class="no">3</span></div>
  <div class="row"><span class="no">4</span><span></span><span class="unit">编制单位:</span></div>
  <div class="row head"><span class="no hl">5</span><span></span>
    <span class="cell b"><span>项</span><span>目</span></span>
    <span class="cell">行次</span><span class="cell">主营业务<br>收入</span><span class="cell">主营业务<br>成本</span>
    <span class="cell f"></span><span class="cell"></span><span class="cell h"></span></div>`;

rows.forEach(([b, c], i) => {
  const title = /、/.test(b) ? " title" : "";
  const flag = /^\d/.test(b) ? " flag" : "";
  const etc = c === "..." ? " etc" : "";
  const last = i === rows.length - 1 ? " last" : "";
  html += `<div class="row${last}"><span class="no">${i + 6}</span><span></span>` +
    `<span class="cell b${title}${flag}${etc}">${b}</span><span class="cell${etc}">${c}</span>${blanks}</div>`;
});
html += '<div class="row"><span class="no">23</span></div>';
document.getElementById("sheet").innerHTML = html;

const lists = [
  ["新序列", ""],
  ["Sun, Mon, Tue, Wed, Thu,", "···"],
  ["Sunday, Monday, Tuesday,", "···"],
  ["Jan, Feb, Mar, Apr, May,", "···"],
  ["January, February, March", "···"],
  ["日, 一, 二, 三, 四, 五, 六", ""],
  ["星期日, 星期一, 星期二,", "···"],
  ["一月, 二月, 三月, 四月,", "···"],
  ["第一季, 第二季, 第三季,", "···"],
  ["正月, 二月, 三月, 四月,", "···"],
  ["子, 丑, 寅, 卯, 辰, 巳,", "···"],
  ["甲, 乙, 丙, 丁, 戊, 己,", "···"]
];
document.getElementById("lists").innerHTML = lists
  .map(([text, more], i) => `<li class="${i === 0 ? "sel" : /^[A-Z]/.test(text) ? "en" : ""}"><span class="txt">${text}</span><span class="more">${more}</span></li>`)
  .join("");
```
